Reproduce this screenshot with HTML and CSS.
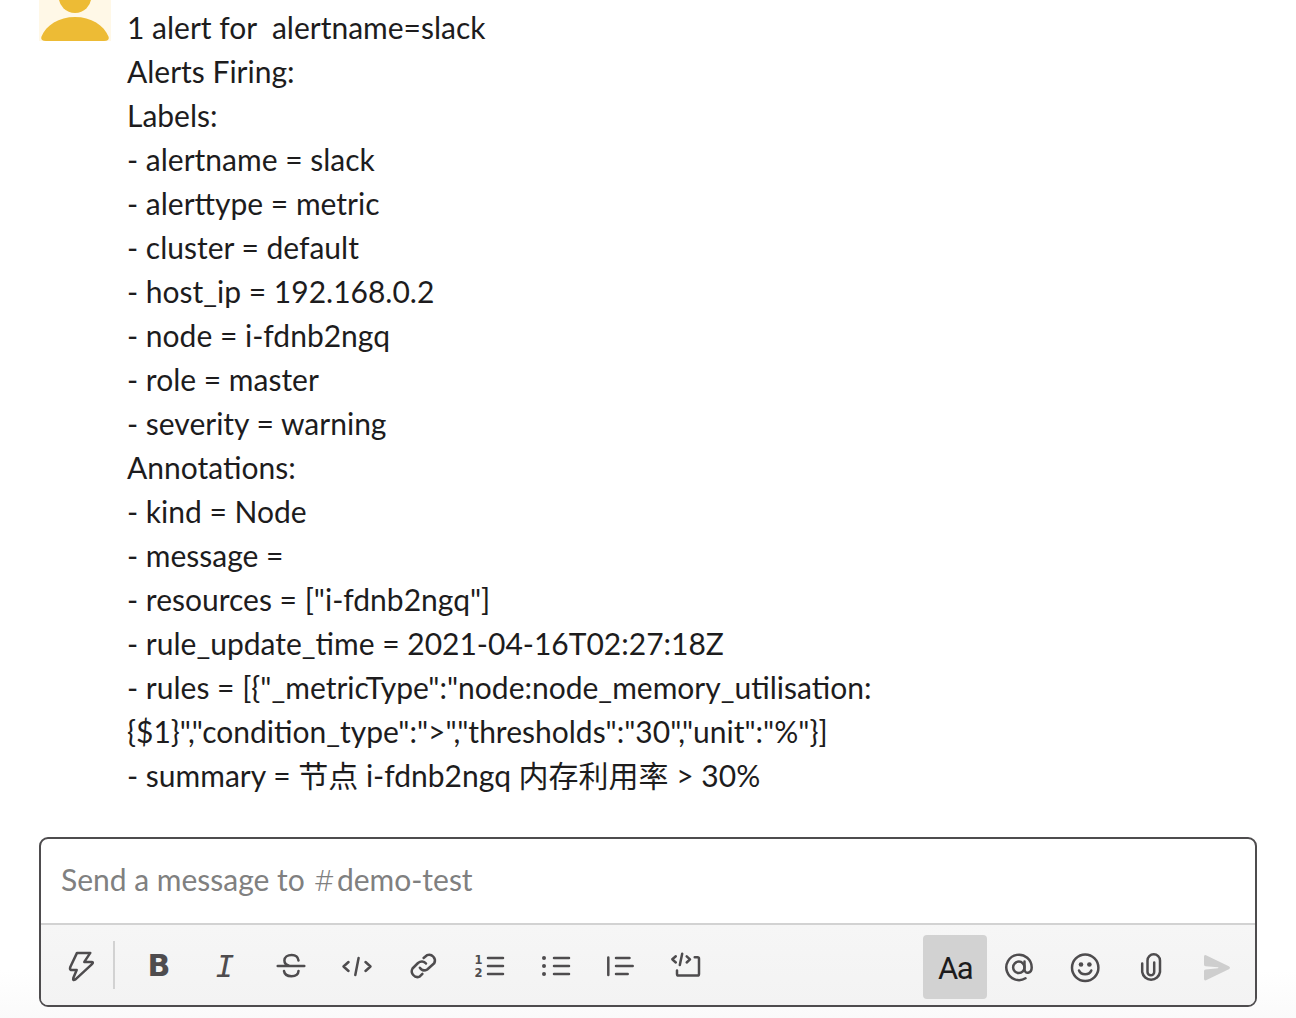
FILE: index.html
```html
<!DOCTYPE html>
<html lang="en">
<head>
<meta charset="utf-8">
<title>demo-test</title>
<link rel="stylesheet" href="styles.css">
</head>
<body>
<main class="channel">
  <article class="message">
    <svg class="avatar" viewBox="0 0 72 72"><rect class="avatar-bg" width="72" height="72"/><circle cx="36" cy="27.7" r="16.3"/><path d="M2.3 68C7 56 20 48 36 48s29 8 33.700 20q.8 4-4.700 4H7q-5.500 0-4.700-4z"/></svg>
    <div class="text">1 alert for  alertname=slack
Alerts Firing:
Labels:
- alertname = slack
- alerttype = metric
- cluster = default
- host_ip = 192.168.0.2
- node = i-fdnb2ngq
- role = master
- severity = warning
Annotations:
- kind = Node
- message =
- resources = ["i-fdnb2ngq"]
- rule_update_time = 2021-04-16T02:27:18Z
- rules = [{"_metricType":"node:node_memory_utilisation:
{$1}","condition_type":"&gt;","thresholds":"30","unit":"%"}]
- summary = 节点 i-fdnb2ngq 内存利用率 &gt; 30%</div>
  </article>
  <section class="composer">
    <div class="placeholder">Send a message to <span class="hash">#</span>demo-test</div>
    <div class="toolbar">
      <div class="tool"><svg viewBox="0 0 64 64"><path d="M28 17.900H41.300L35.300 26.900H42.500Q44.800 27 43.300 28.800L26.500 44.300Q23.500 46 24.300 43L27.700 35H22Q20.500 34.500 21.300 32Z"/></svg></div>
      <div class="divider"></div>
      <div class="group">
        <div class="tool bold">B</div>
        <div class="tool italic">I</div>
        <div class="tool"><svg viewBox="0 0 64 64"><path d="M18.700 31H45.300M39.500 25.500C39 21.500 36 20 32.700 20C28.500 20 25.400 22.300 25.400 25.500C25.400 28 27 29.700 30 30.700M25 36C25.500 39.500 28.500 41.200 32.500 41.200S39.300 39.500 39.500 36"/></svg></div>
        <div class="tool"><svg viewBox="0 0 64 64"><path d="M23.500 27L18.500 31.500L23.500 36M33.600 23L30.300 40M40.500 27L45.500 31.500L40.500 36"/></svg></div>
        <div class="tool"><svg viewBox="0 0 64 64"><path d="M32.600 23L36 20.200A5.800 5.800 0 0 1 43.200 28.300L36.500 34.300C33.500 36 30.500 35.500 28.800 32.700M35 28.500C33 26 29.500 26 27 28L21.500 33.500A5.800 5.800 0 0 0 28.600 41.700L31.400 38.900"/></svg></div>
        <div class="tool"><svg viewBox="0 0 64 64"><path d="M31 23H46M31 31H46M31 39H46"/><text class="digit" x="17.500" y="28.500">1</text><text class="digit" x="17.500" y="42">2</text></svg></div>
        <div class="tool"><svg viewBox="0 0 64 64"><path d="M31 23H46M31 31H46M31 39H46"/><g class="solid"><circle cx="21" cy="23" r="2"/><circle cx="21" cy="31" r="2"/><circle cx="21" cy="39" r="2"/></g></svg></div>
        <div class="tool"><svg viewBox="0 0 64 64"><path d="M19.300 22.500V40M27 23H40.500M27 31H43.700M27 39H38.700"/></svg></div>
        <div class="tool"><svg viewBox="0 0 64 64"><path d="M20.800 21.300L17.300 24.300L20.800 27.500M27.200 18.800L24.800 30M31.700 21.300L35 24.300L31.700 27.500M39.700 22.300H42.500Q44 22.300 44 23.800V39Q44 40.600 42.400 40.600H23.600Q22 40.600 22 39V35.500"/></svg></div>
      </div>
      <div class="actions">
        <div class="tool format">Aa</div>
        <div class="tool"><svg viewBox="0 0 64 64"><circle cx="31.800" cy="32.300" r="5.700"/><path d="M37.500 26.600V34.300C37.500 39.500 44.700 38.800 44.700 32.500A12.700 12.700 0 1 0 38.500 43.300"/></svg></div>
      </div>
      <div class="group trailing">
        <div class="tool"><svg viewBox="0 0 64 64"><circle cx="32.200" cy="32.700" r="13.200"/><path d="M26 35.500C28 40.500 36.300 40.500 38.300 35.500"/><g class="solid"><circle cx="28" cy="29.500" r="2.300"/><circle cx="36.400" cy="29.500" r="2.300"/></g></svg></div>
        <div class="tool"><svg viewBox="0 0 64 64"><path d="M23.200 28.500V37A9 9 0 0 0 41 37V25.500A6.200 6.200 0 0 0 28.500 25.500V37A3.300 3.300 0 0 0 35.200 37V27.500"/></svg></div>
        <div class="tool send"><svg viewBox="0 0 64 64"><path class="solid" d="M21 20.300L43.800 31.200Q46.200 32.700 43.800 34.200L21 45.300Q19 46 19 43.500V36Q19 34.800 20.500 34.500L33 33.300Q34 32.700 33 32.200L20.500 31.200Q19 31 19 29.500V22Q19 19.500 21 20.300Z"/></svg></div>
      </div>
    </div>
  </section>
</main>
</body>
</html>
```
FILE: styles.css
```css
body { margin: 0; }
.channel { height: 1018px; overflow: hidden; display: flex; flex-direction: column; background: linear-gradient(#fff 970px, #fafafa 1018px); }
.message { display: flex; gap: 16px; padding: 0 39px; height: 837px; }
.avatar { width: 72px; height: 72px; margin-top: -31px; fill: #edbb35; }
.avatar-bg { fill: #fff8e7; }
.text { padding-top: 5px; font: 30px/44px Lato, "Noto Sans CJK SC", sans-serif; color: #1d1c1d; white-space: pre; }
.composer { box-sizing: border-box; height: 170px; margin: 0 39px; border: 2px solid #4e4c4e; border-radius: 9px; overflow: hidden; background: #fff; }
.placeholder { padding: 18px 20px 22px; font: 30px/44px Lato, sans-serif; color: #808080; white-space: pre; }
.hash { padding: 0 3px 0 2px; font: 300 30px/0 "Open Sans", sans-serif; }
.toolbar { box-sizing: border-box; height: 82px; display: flex; padding: 10px 6px 6px 8px; border-top: 2px solid #d2d2d2; background: linear-gradient(#f6f6f6, #f3f3f3); }
.tool { width: 64px; height: 64px; border-radius: 4px; color: #4e4c4e; text-align: center; }
.tool svg { display: block; width: 64px; height: 64px; fill: none; stroke: currentColor; stroke-width: 2.5; stroke-linecap: round; stroke-linejoin: round; }
.tool .solid, .tool .digit { fill: currentColor; stroke: none; }
.digit { font: 700 11.5px "DejaVu Sans", sans-serif; }
.divider { width: 2px; height: 48px; margin: 6px 12px 0 0; background: #d2d2d2; }
.group { display: flex; gap: 2px; }
.actions { display: flex; margin-left: auto; }
.trailing { margin-left: 2px; }
.bold { font: 700 30px/62px "DejaVu Sans", sans-serif; }
.italic { font: italic 31px/62px "DejaVu Sans Mono", monospace; }
.format { background: #d2d2d2; color: #1d1c1d; font: 31px/67px Roboto, sans-serif; letter-spacing: -1.5px; }
.send { color: #cecece; }
```
